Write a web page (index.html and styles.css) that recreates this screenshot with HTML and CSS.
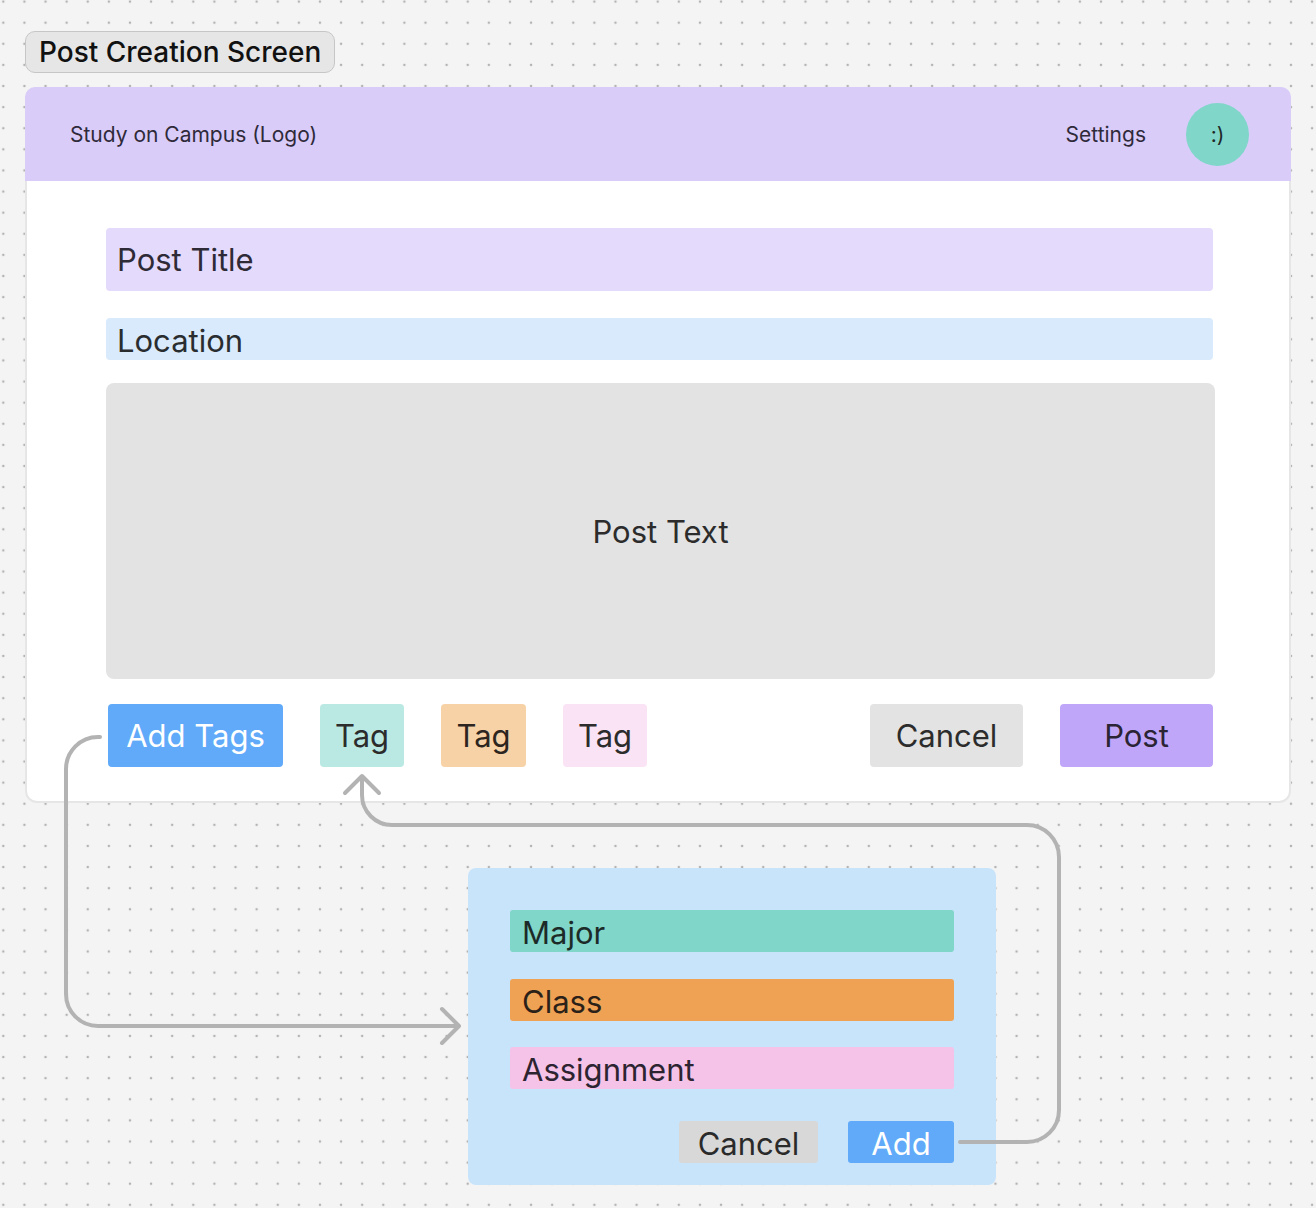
FILE: index.html
```html
<!DOCTYPE html>
<html lang="en">
<head>
<meta charset="utf-8">
<title>Post Creation Screen</title>
<link rel="stylesheet" href="styles.css">
</head>
<body>
<div class="canvas">
  <div class="frame-label">Post Creation Screen</div>

  <section class="frame">
    <header class="topbar">
      <div class="logo">Study on Campus (Logo)</div>
      <div class="topbar-right">
        <span class="settings">Settings</span>
        <span class="avatar">:)</span>
      </div>
    </header>
    <div class="content">
      <div class="field field-title">Post Title</div>
      <div class="field field-location">Location</div>
      <div class="post-text">Post Text</div>
      <div class="actions">
        <div class="tags">
          <span class="btn btn-blue">Add Tags</span>
          <span class="btn tag tag-teal">Tag</span>
          <span class="btn tag tag-orange">Tag</span>
          <span class="btn tag tag-pink">Tag</span>
        </div>
        <div class="submit">
          <span class="btn btn-wide btn-gray">Cancel</span>
          <span class="btn btn-wide btn-purple">Post</span>
        </div>
      </div>
    </div>
  </section>

  <section class="popup">
    <div class="opt opt-major">Major</div>
    <div class="opt opt-class">Class</div>
    <div class="opt opt-assign">Assignment</div>
    <div class="popup-actions">
      <span class="pbtn pbtn-cancel">Cancel</span>
      <span class="pbtn pbtn-add">Add</span>
    </div>
  </section>

  <svg class="connectors" width="1316" height="1208" viewBox="0 0 1316 1208" aria-hidden="true">
    <g fill="none" stroke="#b3b3b3" stroke-width="4" stroke-linecap="round" stroke-linejoin="round">
      <path d="M 100 737 H 98 A 32 32 0 0 0 66 769 V 994 A 32 32 0 0 0 98 1026 H 458"/>
      <path d="M 442 1009 L 459 1026 L 442 1043"/>
      <path d="M 960 1142 H 1027 A 32 32 0 0 0 1059 1110 V 857 A 32 32 0 0 0 1027 825 H 392 A 30 30 0 0 1 362 795 V 778"/>
      <path d="M 345 793 L 362 776 L 379 793"/>
    </g>
  </svg>
</div>
</body>
</html>
```

FILE: styles.css
```css
* { box-sizing: border-box; }

html, body {
  margin: 0;
  padding: 0;
}

body {
  width: 1316px;
  height: 1208px;
  overflow: hidden;
  font-family: Inter, "Noto Sans", "Liberation Sans", sans-serif;
  color: #2c2c2c;
  background-color: #f4f4f4;
  background-image: radial-gradient(circle at center, #b2b2b2 1.05px, rgba(178,178,178,0) 1.6px);
  background-size: 21.12px 21.12px;
  background-position: -7.26px 12.14px;
}

.canvas {
  position: relative;
  width: 1316px;
  height: 1208px;
  padding-top: 31px;
  padding-left: 25px;
}

.frame-label {
  display: flex;
  width: fit-content;
  align-items: center;
  height: 42px;
  padding: 0 13px;
  background: #e6e6e6;
  border: 1px solid #c6c6c6;
  border-radius: 10px;
  font-size: 28px;
  font-weight: 500;
  color: #111;
}

.frame {
  margin-top: 14px;
  width: 1266px;
  height: 716px;
  background: #fff;
  border: 2px solid #e6e6e6;
  border-radius: 12px;
}

.topbar {
  margin: -2px -2px 0 -2px;
  height: 94px;
  background: #d9ccf9;
  border-radius: 10px 10px 0 0;
  display: flex;
  align-items: center;
  justify-content: space-between;
  padding: 0 42px 0 45px;
  color: #2f2a3a;
  font-size: 21px;
}

.topbar-right {
  display: flex;
  align-items: center;
  gap: 38px;
}

.settings {
  margin-right: 2px;
}

.avatar {
  width: 63px;
  height: 63px;
  border-radius: 50%;
  background: #7fd6c9;
  display: flex;
  align-items: center;
  justify-content: center;
  font-size: 21px;
  color: #1f2a28;
}

.content {
  padding: 47px 0 0 79px;
  display: flex;
  flex-direction: column;
}

.field {
  width: 1107px;
  display: flex;
  align-items: center;
  padding-left: 11px;
  font-size: 31px;
  border-radius: 4px;
}

.field-title {
  height: 63px;
  background: #e4dafc;
  color: #2e2a36;
}

.field-location {
  margin-top: 27px;
  height: 42px;
  padding-top: 2px;
  background: #d8eafc;
  color: #2a2d30;
}

.post-text {
  margin-top: 23px;
  width: 1109px;
  height: 296px;
  background: #e3e3e3;
  border-radius: 8px;
  display: flex;
  align-items: center;
  justify-content: center;
  font-size: 31px;
  color: #2c2c2c;
}

.actions {
  margin-top: 25px;
  width: 1107px;
  padding-left: 2px;
  display: flex;
  justify-content: space-between;
}

.tags, .submit {
  display: flex;
  gap: 37px;
}

.btn {
  height: 63px;
  display: flex;
  align-items: center;
  justify-content: center;
  font-size: 31px;
  border-radius: 4px;
  color: #2c2c2c;
}

.btn-blue {
  width: 175px;
  background: #60aaf9;
  color: #fff;
}

.tag { width: 84px; }
.tag-teal { background: #bae9e3; }
.tag-orange { width: 85px; background: #f7d2a7; color: #2d2620; }
.tag-pink { background: #fae3f5; }

.btn-wide { width: 153px; }
.btn-gray { background: #e3e3e3; }
.btn-purple { background: #c0a6f9; color: #2a2434; }

.popup {
  margin: 65px 0 0 443px;
  width: 528px;
  height: 317px;
  background: #c8e4fb;
  border-radius: 8px;
  padding: 42px 42px 0 42px;
  display: flex;
  flex-direction: column;
}

.opt {
  height: 42px;
  display: flex;
  align-items: center;
  padding: 2px 0 0 12px;
  font-size: 31px;
  border-radius: 3px;
}

.opt-major { background: #7fd6c9; color: #1d2b28; }
.opt-class { margin-top: 27px; background: #f0a254; color: #2b2118; }
.opt-assign { margin-top: 26px; background: #f5c2e8; color: #2c2430; }

.popup-actions {
  margin-top: 32px;
  display: flex;
  justify-content: flex-end;
  gap: 30px;
}

.pbtn {
  height: 42px;
  display: flex;
  align-items: center;
  justify-content: center;
  padding-top: 2px;
  font-size: 31px;
  border-radius: 3px;
}

.pbtn-cancel { width: 139px; background: #d8d8d8; color: #2a2a2a; }
.pbtn-add { width: 106px; background: #60aaf9; color: #fff; }

.connectors {
  position: absolute;
  top: 0;
  left: 0;
  pointer-events: none;
}
```
